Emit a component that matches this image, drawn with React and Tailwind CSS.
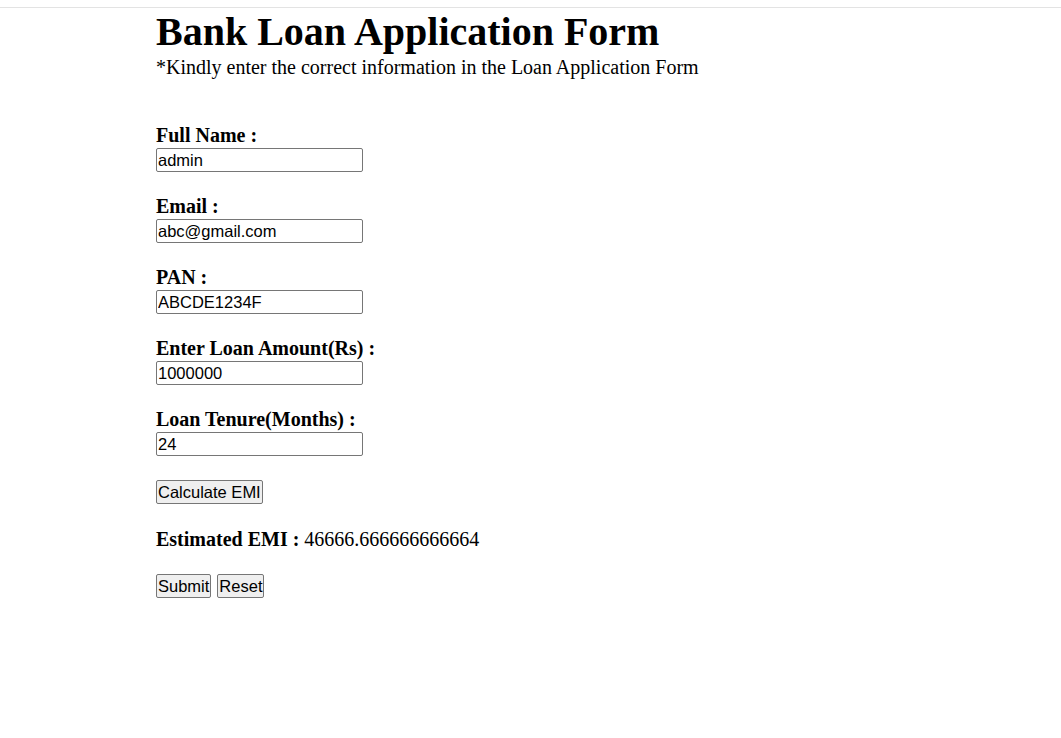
import { useState } from 'react'

const fields = [
  { label: 'Full Name :', value: 'admin' },
  { label: 'Email :', value: 'abc@gmail.com' },
  { label: 'PAN :', value: 'ABCDE1234F' },
  { label: 'Enter Loan Amount(Rs) :', value: '1000000' },
  { label: 'Loan Tenure(Months) :', value: '24' },
]

const inputCls =
  "block w-[207px] h-[24px] border border-[#767676] rounded-[2px] px-[1px] py-[1px] text-[16.5px] leading-[18px] text-black font-['Liberation_Sans',Arial,sans-serif] outline-none"

const btnCls =
  "h-[24px] border border-[#767676] rounded-[2px] bg-[#efefef] px-[1px] text-[16.5px] leading-[18px] text-black font-['Liberation_Sans',Arial,sans-serif]"

export default function App() {
  const [values, setValues] = useState(fields.map(f => f.value))
  const [emi, setEmi] = useState('46666.666666666664')

  const calculate = () => {
    const amount = parseFloat(values[3]) || 0
    const months = parseFloat(values[4]) || 1
    setEmi(String((amount * 1.12) / months))
  }

  return (
    <div className="min-h-[738px] bg-white text-black font-['Liberation_Serif','Times_New_Roman',serif] text-[20px]">
      <div className="h-[7px]" />
      <div className="h-px bg-[#e3e3e3]" />
      <div className="pl-[156px]">
        <h1 className="mt-[2px] text-[40px] leading-[44px] font-bold">Bank Loan Application Form</h1>
        <p className="mt-[2px] leading-[23px]">
          *Kindly enter the correct information in the Loan Application Form
        </p>

        <form className="mt-[45px]" onSubmit={e => e.preventDefault()}>
          {fields.map((f, i) => (
            <div key={f.label} className="mb-[23px]">
              <label className="block font-bold leading-[23px]">{f.label}</label>
              <input
                className={inputCls + ' mt-[1px]'}
                value={values[i]}
                onChange={e => {
                  const next = [...values]
                  next[i] = e.target.value
                  setValues(next)
                }}
              />
            </div>
          ))}

          <div className="flex pt-px">
            <button type="button" onClick={calculate} className={btnCls}>
              Calculate EMI
            </button>
          </div>

          <p className="mt-[24px] leading-[23px]">
            <b>Estimated EMI :</b> {emi}
          </p>

          <div className="mt-[23px] flex gap-[6px]">
            <button type="submit" className={btnCls}>Submit</button>
            <button type="reset" className={btnCls}>Reset</button>
          </div>
        </form>
      </div>
    </div>
  )
}
